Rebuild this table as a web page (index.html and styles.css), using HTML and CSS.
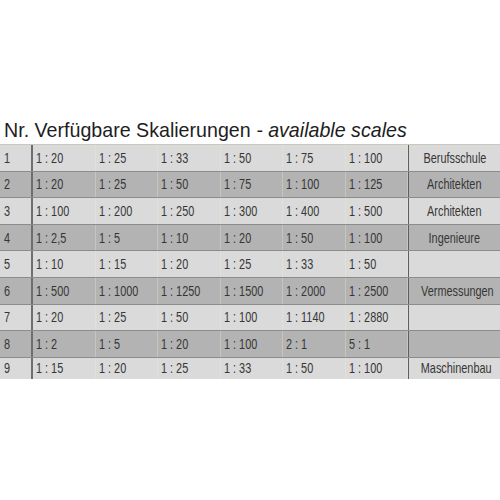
FILE: index.html
```html
<!DOCTYPE html>
<html>
<head>
<meta charset="utf-8">
<link rel="stylesheet" href="styles.css">
</head>
<body>
<div class="page">
  <h1 class="title"><span class="tt">Nr. Verfügbare Skalierungen <em>- available scales</em></span></h1>
  <div class="table">
    <div class="row light"><div class="nr"><span>1</span></div><div class="c"><span>1 : 20</span></div><div class="c"><span>1 : 25</span></div><div class="c"><span>1 : 33</span></div><div class="c"><span>1 : 50</span></div><div class="c"><span>1 : 75</span></div><div class="c"><span>1 : 100</span></div><div class="use"><span>Berufsschule</span></div></div>
    <div class="row dark"><div class="nr"><span>2</span></div><div class="c"><span>1 : 20</span></div><div class="c"><span>1 : 25</span></div><div class="c"><span>1 : 50</span></div><div class="c"><span>1 : 75</span></div><div class="c"><span>1 : 100</span></div><div class="c"><span>1 : 125</span></div><div class="use"><span>Architekten</span></div></div>
    <div class="row light"><div class="nr"><span>3</span></div><div class="c"><span>1 : 100</span></div><div class="c"><span>1 : 200</span></div><div class="c"><span>1 : 250</span></div><div class="c"><span>1 : 300</span></div><div class="c"><span>1 : 400</span></div><div class="c"><span>1 : 500</span></div><div class="use"><span>Architekten</span></div></div>
    <div class="row dark"><div class="nr"><span>4</span></div><div class="c"><span>1 : 2,5</span></div><div class="c"><span>1 : 5</span></div><div class="c"><span>1 : 10</span></div><div class="c"><span>1 : 20</span></div><div class="c"><span>1 : 50</span></div><div class="c"><span>1 : 100</span></div><div class="use"><span>Ingenieure</span></div></div>
    <div class="row light"><div class="nr"><span>5</span></div><div class="c"><span>1 : 10</span></div><div class="c"><span>1 : 15</span></div><div class="c"><span>1 : 20</span></div><div class="c"><span>1 : 25</span></div><div class="c"><span>1 : 33</span></div><div class="c"><span>1 : 50</span></div><div class="use"></div></div>
    <div class="row dark"><div class="nr"><span>6</span></div><div class="c"><span>1 : 500</span></div><div class="c"><span>1 : 1000</span></div><div class="c"><span>1 : 1250</span></div><div class="c"><span>1 : 1500</span></div><div class="c"><span>1 : 2000</span></div><div class="c"><span>1 : 2500</span></div><div class="use"><span>Vermessungen</span></div></div>
    <div class="row light"><div class="nr"><span>7</span></div><div class="c"><span>1 : 20</span></div><div class="c"><span>1 : 25</span></div><div class="c"><span>1 : 50</span></div><div class="c"><span>1 : 100</span></div><div class="c"><span>1 : 1140</span></div><div class="c"><span>1 : 2880</span></div><div class="use"></div></div>
    <div class="row dark"><div class="nr"><span>8</span></div><div class="c"><span>1 : 2</span></div><div class="c"><span>1 : 5</span></div><div class="c"><span>1 : 20</span></div><div class="c"><span>1 : 100</span></div><div class="c"><span>2 : 1</span></div><div class="c"><span>5 : 1</span></div><div class="use"></div></div>
    <div class="row light last"><div class="nr"><span>9</span></div><div class="c"><span>1 : 15</span></div><div class="c"><span>1 : 20</span></div><div class="c"><span>1 : 25</span></div><div class="c"><span>1 : 33</span></div><div class="c"><span>1 : 50</span></div><div class="c"><span>1 : 100</span></div><div class="use"><span>Maschinenbau</span></div></div>
  </div>
</div>
</body>
</html>
```

FILE: styles.css
```css
html, body {
  margin: 0;
  padding: 0;
  background: #ffffff;
}
.page {
  width: 500px;
  height: 500px;
  overflow: hidden;
  padding-top: 115px;
  box-sizing: border-box;
}
.title {
  margin: 0 0 0 4px;
  font-family: "Liberation Sans", Arial, sans-serif;
  font-weight: normal;
  font-size: 21px;
  line-height: 29px;
  color: #1e1e1e;
  white-space: nowrap;
}
.tt {
  display: inline-block;
  transform: scaleX(0.935);
  transform-origin: left center;
}
.title em {
  font-style: italic;
}
.table {
  font-family: "Liberation Sans", Arial, sans-serif;
  font-size: 14.5px;
  color: #363636;
  border-top: 1px solid #c9c9bd;
}
.row {
  display: grid;
  grid-template-columns: 33px repeat(6, 62.5px) 1fr;
  height: 26.6px;
  box-sizing: border-box;
  border-bottom: 1px solid #8c8c8c;
  align-items: stretch;
}
.row.last {
  height: 21px;
  border-bottom: none;
}
.light { background: #dadada; }
.dark { background: #b3b3b3; }
.row span {
  display: inline-block;
  white-space: nowrap;
  transform: scaleX(0.75);
  transform-origin: left center;
}
.nr {
  padding-left: 4px;
  border-right: 2px solid #6e6e6e;
  display: flex;
  align-items: center;
}
.c {
  padding-left: 3px;
  display: flex;
  align-items: center;
  border-right: 1px solid rgba(235, 235, 205, 0.35);
}
.use {
  border-left: 1px solid #5e5e5e;
  display: flex;
  align-items: center;
  justify-content: center;
}
.use span {
  transform-origin: center center;
}
```
